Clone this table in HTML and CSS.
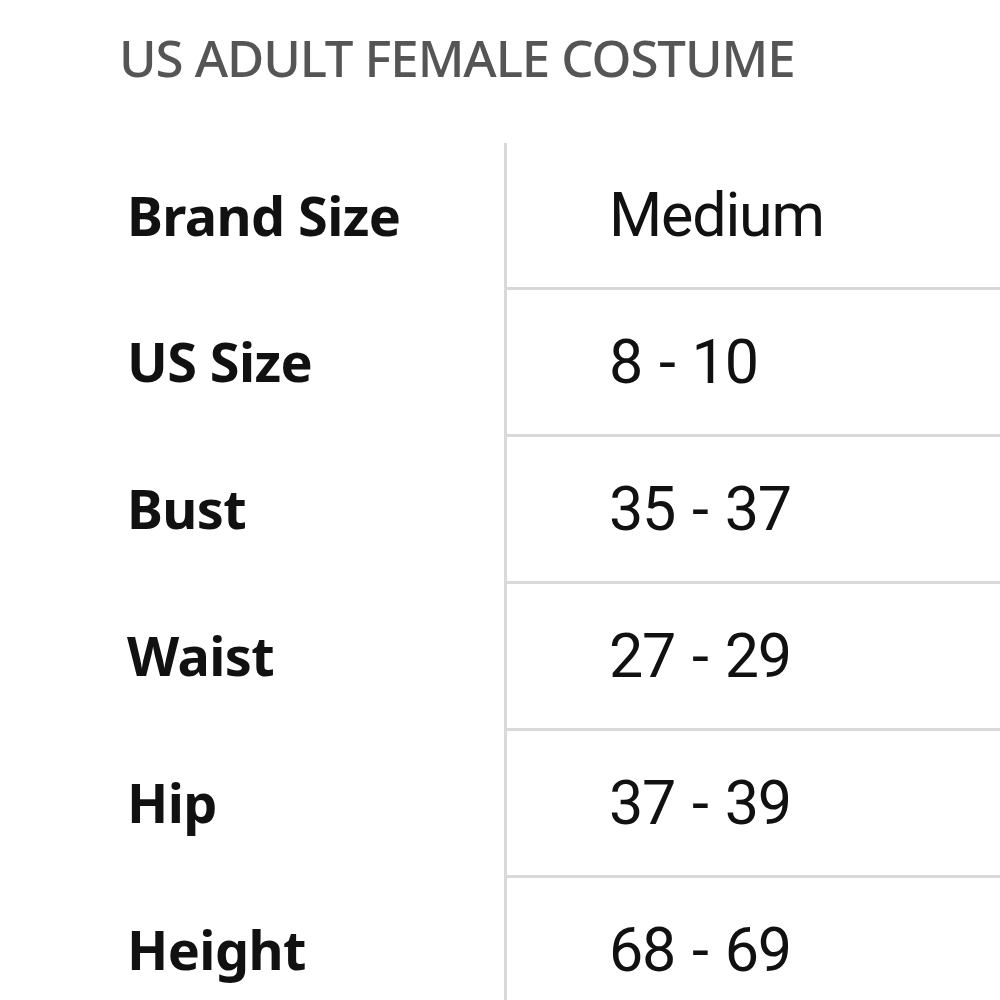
FILE: index.html
```html
<!DOCTYPE html>
<html>
<head>
<meta charset="utf-8">
<link rel="stylesheet" href="styles.css">
</head>
<body>
<div class="page">
  <h1 class="title">US ADULT FEMALE COSTUME</h1>
  <div class="table">
    <div class="row first"><div class="label">Brand Size</div><div class="value">Medium</div></div>
    <div class="row"><div class="label">US Size</div><div class="value">8 - 10</div></div>
    <div class="row"><div class="label">Bust</div><div class="value">35 - 37</div></div>
    <div class="row"><div class="label">Waist</div><div class="value">27 - 29</div></div>
    <div class="row"><div class="label">Hip</div><div class="value">37 - 39</div></div>
    <div class="row"><div class="label">Height</div><div class="value">68 - 69</div></div>
  </div>
</div>
</body>
</html>
```
FILE: styles.css
```css
html, body {
  margin: 0;
  padding: 0;
  background: #ffffff;
  overflow: hidden;
}
.page {
  width: 1000px;
  height: 1000px;
  overflow: hidden;
}
.title {
  margin: 0;
  padding: 25px 0 0 119px;
  height: 143px;
  box-sizing: border-box;
  font-family: "Noto Sans", sans-serif;
  font-weight: 500;
  font-size: 51px;
  line-height: 64px;
  color: #555555;
  letter-spacing: -1.1px;
  white-space: nowrap;
}
.table {
  display: flex;
  flex-direction: column;
}
.row {
  display: grid;
  grid-template-columns: 504px 1fr;
  height: 147px;
}
.row.first {
  height: 144px;
}
.label {
  display: flex;
  align-items: center;
  padding-left: 127px;
  font-family: "Noto Sans", sans-serif;
  font-weight: 700;
  font-size: 54px;
  color: #111111;
  letter-spacing: -0.6px;
}
.value {
  display: flex;
  align-items: center;
  padding-left: 102px;
  border-left: 3px solid #d9d9dc;
  border-top: 3px solid #d9d9dc;
  font-family: Roboto, sans-serif;
  font-weight: 400;
  font-size: 61px;
  color: #111111;
  letter-spacing: -1.2px;
  word-spacing: 3px;
  white-space: pre;
}
.row.first .value {
  border-top: none;
}
```
